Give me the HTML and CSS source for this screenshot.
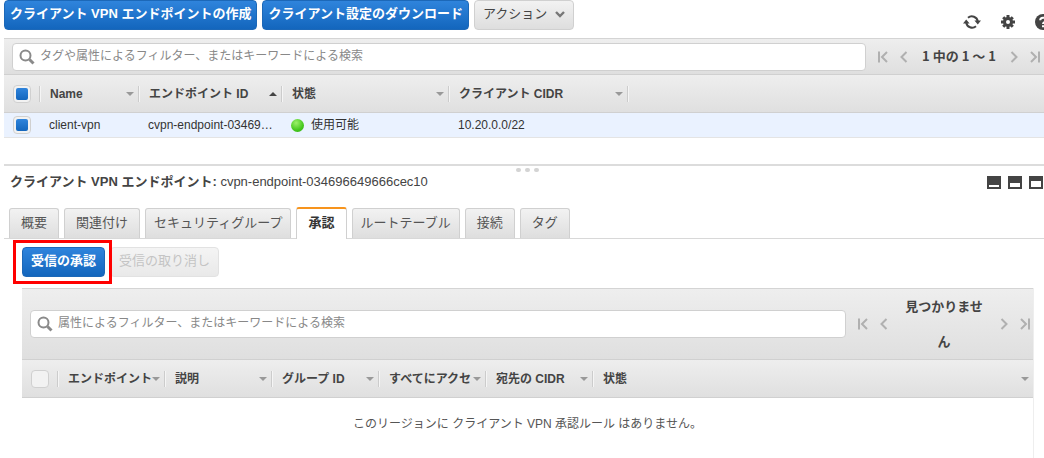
FILE: index.html
```html
<!DOCTYPE html>
<html lang="ja">
<head>
    <meta charset="UTF-8">
    <meta name="viewport" content="width=device-width, initial-scale=1.0">
    <title>クライアント VPN エンドポイント</title>
    <link rel="stylesheet" href="styles.css">
</head>
<body>
    <!-- shared icon shapes -->
    <svg class="icon-defs" width="0" height="0" aria-hidden="true">
        <symbol id="search" viewBox="0 0 16 16">
            <circle cx="6.5" cy="6.5" r="5" fill="none" stroke="#8a8a8a" stroke-width="2"/>
            <path d="M10.5 10.5L14.5 14.5" stroke="#8a8a8a" stroke-width="3"/>
        </symbol>
        <symbol id="first" viewBox="0 0 10 12">
            <path d="M1 0.5V11.5M9 1L4 6L9 11" fill="none" stroke="#b0b0b0" stroke-width="2"/>
        </symbol>
        <symbol id="prev" viewBox="0 0 8 12">
            <path d="M6.5 1L1.5 6L6.5 11" fill="none" stroke="#b0b0b0" stroke-width="2"/>
        </symbol>
        <symbol id="next" viewBox="0 0 8 12">
            <path d="M1.5 1L6.5 6L1.5 11" fill="none" stroke="#b0b0b0" stroke-width="2"/>
        </symbol>
        <symbol id="last" viewBox="0 0 10 12">
            <path d="M9 0.5V11.5M1 1L6 6L1 11" fill="none" stroke="#b0b0b0" stroke-width="2"/>
        </symbol>
    </svg>

    <div class="actions">
        <button class="btn btn-primary">クライアント VPN エンドポイントの作成</button>
        <button class="btn btn-primary">クライアント設定のダウンロード</button>
        <button class="btn btn-menu">アクション
            <svg width="10" height="7" viewBox="0 0 10 7"><path d="M1 1L5 5L9 1" fill="none" stroke="#777" stroke-width="2.4"/></svg>
        </button>
        <div class="tools">
            <button class="icon-btn" aria-label="更新">
                <svg width="18" height="16" viewBox="0 0 18 16">
                    <path d="M5 3.8A6 6 0 0 1 14.8 7.5M13 12.2A6 6 0 0 1 3.2 8.5" fill="none" stroke="#444" stroke-width="2"/>
                    <path d="M11.4 6.5H18L14.8 10.5ZM0 9.5H6.6L3.2 5.5Z" fill="#444"/>
                </svg>
            </button>
            <button class="icon-btn" aria-label="設定">
                <svg width="14" height="14" viewBox="0 0 14 14">
                    <g stroke="#444" stroke-width="3">
                        <path d="M7 0V14M0 7H14M2.2 2.2L11.8 11.8M11.8 2.2L2.2 11.8"/>
                    </g>
                    <circle cx="7" cy="7" r="5" fill="#444"/>
                    <circle cx="7" cy="7" r="2" fill="#fff"/>
                </svg>
            </button>
            <button class="icon-btn" aria-label="ヘルプ">
                <svg width="16" height="16" viewBox="0 0 16 16">
                    <circle cx="8" cy="8" r="8" fill="#444"/>
                    <path d="M5.2 6.2C5.2 2.8 10.8 2.8 10.8 6.2C10.8 8 8 8 8 10" fill="none" stroke="#fff" stroke-width="2"/>
                    <path d="M7 11.2H9V13.2H7Z" fill="#fff"/>
                </svg>
            </button>
        </div>
    </div>

    <div class="list">
        <div class="toolbar">
            <label class="search">
                <svg width="16" height="16"><use href="#search"/></svg>
                <input type="text" aria-label="エンドポイントの検索" placeholder="タグや属性によるフィルター、またはキーワードによる検索">
            </label>
            <div class="pager">
                <button class="icon-btn" aria-label="最初"><svg width="10" height="12"><use href="#first"/></svg></button>
                <button class="icon-btn" aria-label="前"><svg width="8" height="12"><use href="#prev"/></svg></button>
                <span class="pager-label">1 中の 1 ～ 1</span>
                <button class="icon-btn" aria-label="次"><svg width="8" height="12"><use href="#next"/></svg></button>
                <button class="icon-btn" aria-label="最後"><svg width="10" height="12"><use href="#last"/></svg></button>
            </div>
        </div>
        <table class="grid endpoints">
            <colgroup>
                <col class="c-check"><col class="c-name"><col class="c-id"><col class="c-state"><col class="c-cidr"><col>
            </colgroup>
            <thead>
                <tr>
                    <th><input type="checkbox" class="check" aria-label="すべて選択" checked></th>
                    <th><div class="head"><span>Name</span><i class="arrow"></i></div></th>
                    <th><div class="head"><span>エンドポイント ID</span><i class="arrow arrow-up"></i></div></th>
                    <th><div class="head"><span>状態</span><i class="arrow"></i></div></th>
                    <th><div class="head"><span>クライアント CIDR</span><i class="arrow"></i></div></th>
                    <th><div class="head"></div></th>
                </tr>
            </thead>
            <tbody>
                <tr>
                    <td><input type="checkbox" class="check" aria-label="client-vpn" checked></td>
                    <td>client-vpn</td>
                    <td>cvpn-endpoint-03469…</td>
                    <td><div class="state"><i class="dot"></i>使用可能</div></td>
                    <td>10.20.0.0/22</td>
                    <td></td>
                </tr>
            </tbody>
        </table>
    </div>

    <div class="detail">
        <div class="grip"><i></i><i></i><i></i></div>
        <div class="detail-head">
            <h2>クライアント VPN エンドポイント: <span>cvpn-endpoint-034696649666cec10</span></h2>
            <div class="panes">
                <button class="icon-btn" aria-label="小"><svg width="14" height="13" viewBox="0 0 14 13"><path d="M0 0H14V13H0Z" fill="#444"/><path d="M2 9H12V11H2Z" fill="#fff"/></svg></button>
                <button class="icon-btn" aria-label="中"><svg width="14" height="13" viewBox="0 0 14 13"><path d="M0 0H14V13H0Z" fill="#444"/><path d="M2 7H12V11H2Z" fill="#fff"/></svg></button>
                <button class="icon-btn" aria-label="大"><svg width="14" height="13" viewBox="0 0 14 13"><path d="M0 0H14V13H0Z" fill="#444"/><path d="M2 5H12V11H2Z" fill="#fff"/></svg></button>
            </div>
        </div>

        <div class="tabs">
            <button class="tab">概要</button>
            <button class="tab">関連付け</button>
            <button class="tab tab-long">セキュリティグループ</button>
            <button class="tab active">承認</button>
            <button class="tab tab-long">ルートテーブル</button>
            <button class="tab">接続</button>
            <button class="tab">タグ</button>
        </div>

        <div class="tab-body">
            <div class="rule-actions">
                <div class="marked"><button class="btn btn-primary">受信の承認</button></div>
                <button class="btn" disabled>受信の取り消し</button>
            </div>

            <div class="rules">
                <div class="toolbar toolbar-tall">
                    <label class="search">
                        <svg width="16" height="16"><use href="#search"/></svg>
                        <input type="text" aria-label="承認ルールの検索" placeholder="属性によるフィルター、またはキーワードによる検索">
                    </label>
                    <div class="pager">
                        <button class="icon-btn" aria-label="最初"><svg width="10" height="12"><use href="#first"/></svg></button>
                        <button class="icon-btn" aria-label="前"><svg width="8" height="12"><use href="#prev"/></svg></button>
                        <span class="pager-label">見つかりません</span>
                        <button class="icon-btn" aria-label="次"><svg width="8" height="12"><use href="#next"/></svg></button>
                        <button class="icon-btn" aria-label="最後"><svg width="10" height="12"><use href="#last"/></svg></button>
                    </div>
                </div>
                <table class="grid">
                    <colgroup>
                        <col class="c-check"><col class="c-rule"><col class="c-rule"><col class="c-rule"><col class="c-rule"><col class="c-rule"><col>
                    </colgroup>
                    <thead>
                        <tr>
                            <th><input type="checkbox" class="check" aria-label="すべて選択"></th>
                            <th><div class="head"><span>エンドポイント</span><i class="arrow"></i></div></th>
                            <th><div class="head"><span>説明</span><i class="arrow"></i></div></th>
                            <th><div class="head"><span>グループ ID</span><i class="arrow"></i></div></th>
                            <th><div class="head"><span>すべてにアクセ</span><i class="arrow"></i></div></th>
                            <th><div class="head"><span>宛先の CIDR</span><i class="arrow"></i></div></th>
                            <th><div class="head"><span>状態</span><i class="arrow"></i></div></th>
                        </tr>
                    </thead>
                </table>
                <p class="empty">このリージョンに クライアント VPN 承認ルール はありません。</p>
            </div>
        </div>
    </div>
</body>
</html>
```
FILE: styles.css
```css
* {
    box-sizing: border-box;
}
html {
    overflow: hidden;
}
body {
    margin: 0;
    padding-left: 4px;
    background-color: #fff;
    color: #444;
    font-family: "Liberation Sans", "Noto Sans CJK JP", sans-serif;
    font-size: 12px;
    line-height: 16px;
}
button, input {
    font-family: inherit;
    line-height: inherit;
}
svg {
    display: block;
}
.icon-defs {
    position: absolute;
}

/* buttons */
.btn {
    display: flex;
    align-items: center;
    gap: 6px;
    height: 30px;
    padding: 0 8px 2px;
    border: 1px solid #d0d0d0;
    border-radius: 4px;
    background: linear-gradient(#f2f2f2, #dedede);
    color: #444;
    font-size: 13px;
    white-space: nowrap;
}
.btn-primary {
    border-color: #1c68b8;
    background: linear-gradient(#2f84dc, #1366bd);
    color: #fff;
    font-weight: bold;
}
.btn:disabled {
    border-color: #e2e2e2;
    background: linear-gradient(#f4f4f4, #e9e9e9);
    color: #c4c4c4;
}
.icon-btn {
    padding: 0;
    border: none;
    background: none;
}
.actions {
    display: flex;
    gap: 5px;
    height: 38px;
}
.actions .btn {
    padding: 0 5px 2px;
}
.actions .btn-menu {
    padding: 0 8px 2px;
    gap: 8px;
}
.tools {
    display: flex;
    align-items: center;
    gap: 20px;
    margin-left: auto;
    margin-right: -7px;
    padding-top: 6px;
}

/* search bar and paging */
.toolbar {
    display: flex;
    align-items: center;
    gap: 12px;
    height: 36px;
    padding: 0 4px 0 8px;
    border-top: 1px solid #d4d4d4;
    background: linear-gradient(#eee, #dfdfdf);
}
.toolbar-tall {
    height: 71px;
    padding-right: 3px;
}
.search {
    display: flex;
    align-items: center;
    flex: 1;
    gap: 5px;
    height: 28px;
    padding-left: 6px;
    border: 1px solid #d0d0d0;
    border-radius: 4px;
    background-color: #fff;
}
.search input {
    flex: 1;
    min-width: 0;
    padding: 0 0 2px;
    border: none;
    outline: none;
    background: none;
    font-size: 12px;
}
.search input::placeholder {
    color: #888;
}
.pager {
    display: flex;
    align-items: center;
}
.pager .icon-btn:first-child {
    margin-right: 12px;
}
.pager .icon-btn:last-child {
    margin-left: 12px;
}
.pager-label {
    width: 102px;
    padding-bottom: 2px;
    font-family: "Noto Sans CJK JP", sans-serif;
    font-size: 13px;
    font-weight: bold;
    text-align: center;
}
.toolbar-tall .pager-label {
    width: 112px;
    padding: 0 15px 2px;
    line-height: 35px;
}

/* tables */
.grid {
    width: 100%;
    table-layout: fixed;
    border-collapse: collapse;
}
.c-check {
    width: 35px;
}
.c-name {
    width: 99px;
}
.c-id {
    width: 143px;
}
.c-state {
    width: 167px;
}
.c-cidr {
    width: 179px;
}
.c-rule {
    width: 107px;
}
.grid th {
    height: 38px;
    padding: 0;
    border-top: 1px solid #d0d0d0;
    border-bottom: 1px solid #d0d0d0;
    text-align: left;
}
.grid thead {
    background: linear-gradient(#eee, #dfdfdf);
}
.head {
    display: flex;
    align-items: center;
    height: 16px;
    padding: 0 4px 0 10px;
    border-left: 1px solid #ccc;
    box-shadow: inset 1px 0 #f5f5f5;
}
.head span {
    flex: 1;
    overflow: hidden;
    white-space: nowrap;
}
.arrow {
    flex: none;
    border: 4px solid transparent;
    border-top-color: #999;
    border-bottom: none;
}
.arrow-up {
    border-top: none;
    border-bottom: 4px solid #444;
}
.grid td {
    height: 25px;
    padding: 0 4px 0 10px;
    border-bottom: 1px solid #e4e4e4;
    background-color: #eaf2ff;
    color: #333;
    overflow: hidden;
    text-overflow: ellipsis;
    white-space: nowrap;
}
.grid th:first-child, .grid td:first-child {
    padding: 0 0 0 9px;
}
.check {
    appearance: none;
    display: block;
    width: 18px;
    height: 18px;
    margin: 0;
    padding: 2px;
    border: 1px solid #d0d0d0;
    border-radius: 4px;
    background-color: #f2f2f2;
}
.check:checked::before {
    content: "";
    display: block;
    height: 12px;
    border-radius: 2px;
    background: linear-gradient(#2f84dc, #1366bd);
}
.state {
    display: flex;
    align-items: center;
    gap: 7px;
}
.dot {
    width: 13px;
    height: 13px;
    border-radius: 50%;
    background: radial-gradient(circle at 40% 30%, #9bf06a, #45c81e 60%, #2ea80f);
}

/* lower pane */
.detail {
    margin-top: 26px;
    border-top: 2px solid #dcdcdc;
}
.grip {
    display: flex;
    justify-content: center;
    gap: 4px;
    height: 6px;
    padding: 2px 0 0 6px;
}
.grip i {
    width: 5px;
    height: 4px;
    border-radius: 2px;
    background-color: #d4d4d4;
}
.detail-head {
    display: flex;
    align-items: center;
    justify-content: space-between;
    height: 20px;
    padding: 0 1px 0 6px;
}
.detail-head h2 {
    margin: 0;
    font-size: 13px;
}
.detail-head h2 span {
    font-weight: normal;
}
.panes {
    display: flex;
    gap: 7px;
}
.tabs {
    display: flex;
    align-items: flex-end;
    gap: 5px;
    height: 47px;
    padding-left: 5px;
    border-bottom: 1px solid #d8d8d8;
}
.tab {
    height: 30px;
    padding: 0 11px 2px;
    border: 1px solid #d0d0d0;
    border-bottom: none;
    border-radius: 3px 3px 0 0;
    background: linear-gradient(#f2f2f2, #dedede);
    color: #555;
    font-size: 13px;
}
.tab-long {
    padding: 0 8px 2px;
}
.tab.active {
    height: 32px;
    margin-bottom: -1px;
    border-top: 2px solid #f7941d;
    background: #fff;
    color: #333;
    font-weight: bold;
}
.tab-body {
    padding: 8px 10px 0 18px;
}
.rule-actions {
    display: flex;
    align-items: flex-start;
    gap: 5px;
    height: 41px;
}
.marked {
    position: relative;
    z-index: 1;
}
.marked::after {
    content: "";
    position: absolute;
    inset: -7px -7px -7px -9px;
    border: 3px solid #f00;
    pointer-events: none;
}
.rules {
    min-height: 180px;
    border-right: 1px solid #eee;
}
.empty {
    margin: 18px 0;
    color: #555;
    text-align: center;
}
```
